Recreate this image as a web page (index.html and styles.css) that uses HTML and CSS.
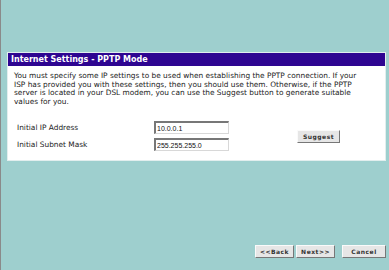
FILE: index.html
```html
<!DOCTYPE html>
<html lang="en">
<head>
  <meta charset="UTF-8">
  <title>Internet Settings - PPTP Mode</title>
  <link rel="stylesheet" href="styles.css">
</head>
<body>
  <div class="page">
    <div class="panel">
      <div class="panel-title">Internet Settings - PPTP Mode</div>
      <div class="panel-body">
        <p class="intro">You must specify some IP settings to be used when establishing the PPTP connection. If your ISP has provided you with these settings, then you should use them. Otherwise, if the PPTP server is located in your DSL modem, you can use the Suggest button to generate suitable values for you.</p>
        <div class="settings">
          <div class="fields">
            <div class="row">
              <label for="ip">Initial IP Address</label>
              <input type="text" id="ip" value="10.0.0.1">
            </div>
            <div class="row">
              <label for="mask">Initial Subnet Mask</label>
              <input type="text" id="mask" value="255.255.255.0">
            </div>
          </div>
          <button type="button" class="btn suggest">Suggest</button>
        </div>
      </div>
    </div>
    <div class="nav">
      <button type="button" class="btn">&lt;&lt;Back</button>
      <button type="button" class="btn">Next&gt;&gt;</button>
      <button type="button" class="btn cancel">Cancel</button>
    </div>
  </div>
</body>
</html>
```

FILE: styles.css
```css
html, body {
  margin: 0;
  padding: 0;
  height: 100%;
}
body {
  background-color: #9ecfce;
  border-left: 1px solid #8a8a8a;
  font-family: "DejaVu Sans", Verdana, sans-serif;
  font-size: 7.4px;
  color: #222;
  box-sizing: border-box;
}
.page {
  display: flex;
  flex-direction: column;
  height: 270px;
  padding: 52px 3px 12px 6px;
  box-sizing: border-box;
}
.panel {
  background-color: white;
  border: 1px solid #e2eeee;
}
.panel-title {
  background-color: #2e0591;
  color: white;
  font-weight: bold;
  font-size: 8px;
  padding: 2px 3px;
  height: 9px;
  line-height: 9px;
}
.panel-body {
  padding: 6px 16px 9px 6px;
}
.intro {
  margin: 0;
  line-height: 8.6px;
}
.settings {
  display: flex;
  align-items: center;
  margin-top: 15px;
}
.fields {
  display: flex;
  flex-direction: column;
  gap: 4px;
}
.row {
  display: flex;
  align-items: center;
}
.row label {
  width: 137px;
  padding-left: 3px;
}
.row input {
  width: 70px;
  height: 8px;
  font-family: "Liberation Sans", Arial, sans-serif;
  font-size: 7px;
  padding: 1px 1px;
  border: 1px solid #d8d8d8;
  border-top: 2px solid #777;
  border-left: 2px solid #777;
  color: #111;
}
.btn {
  font-family: "DejaVu Sans", Verdana, sans-serif;
  font-size: 6px;
  font-weight: bold;
  color: #333;
  background-color: #e6e6e6;
  border: 1px solid;
  border-color: #fafafa #777 #777 #fafafa;
  padding: 0 4px;
  height: 13px;
  letter-spacing: 0.5px;
}
.suggest {
  margin-left: 68px;
  width: 43px;
}
.nav {
  margin-top: auto;
  display: flex;
  justify-content: flex-end;
  gap: 2px;
}
.nav .cancel {
  margin-left: 5px;
  width: 44px;
}
```
